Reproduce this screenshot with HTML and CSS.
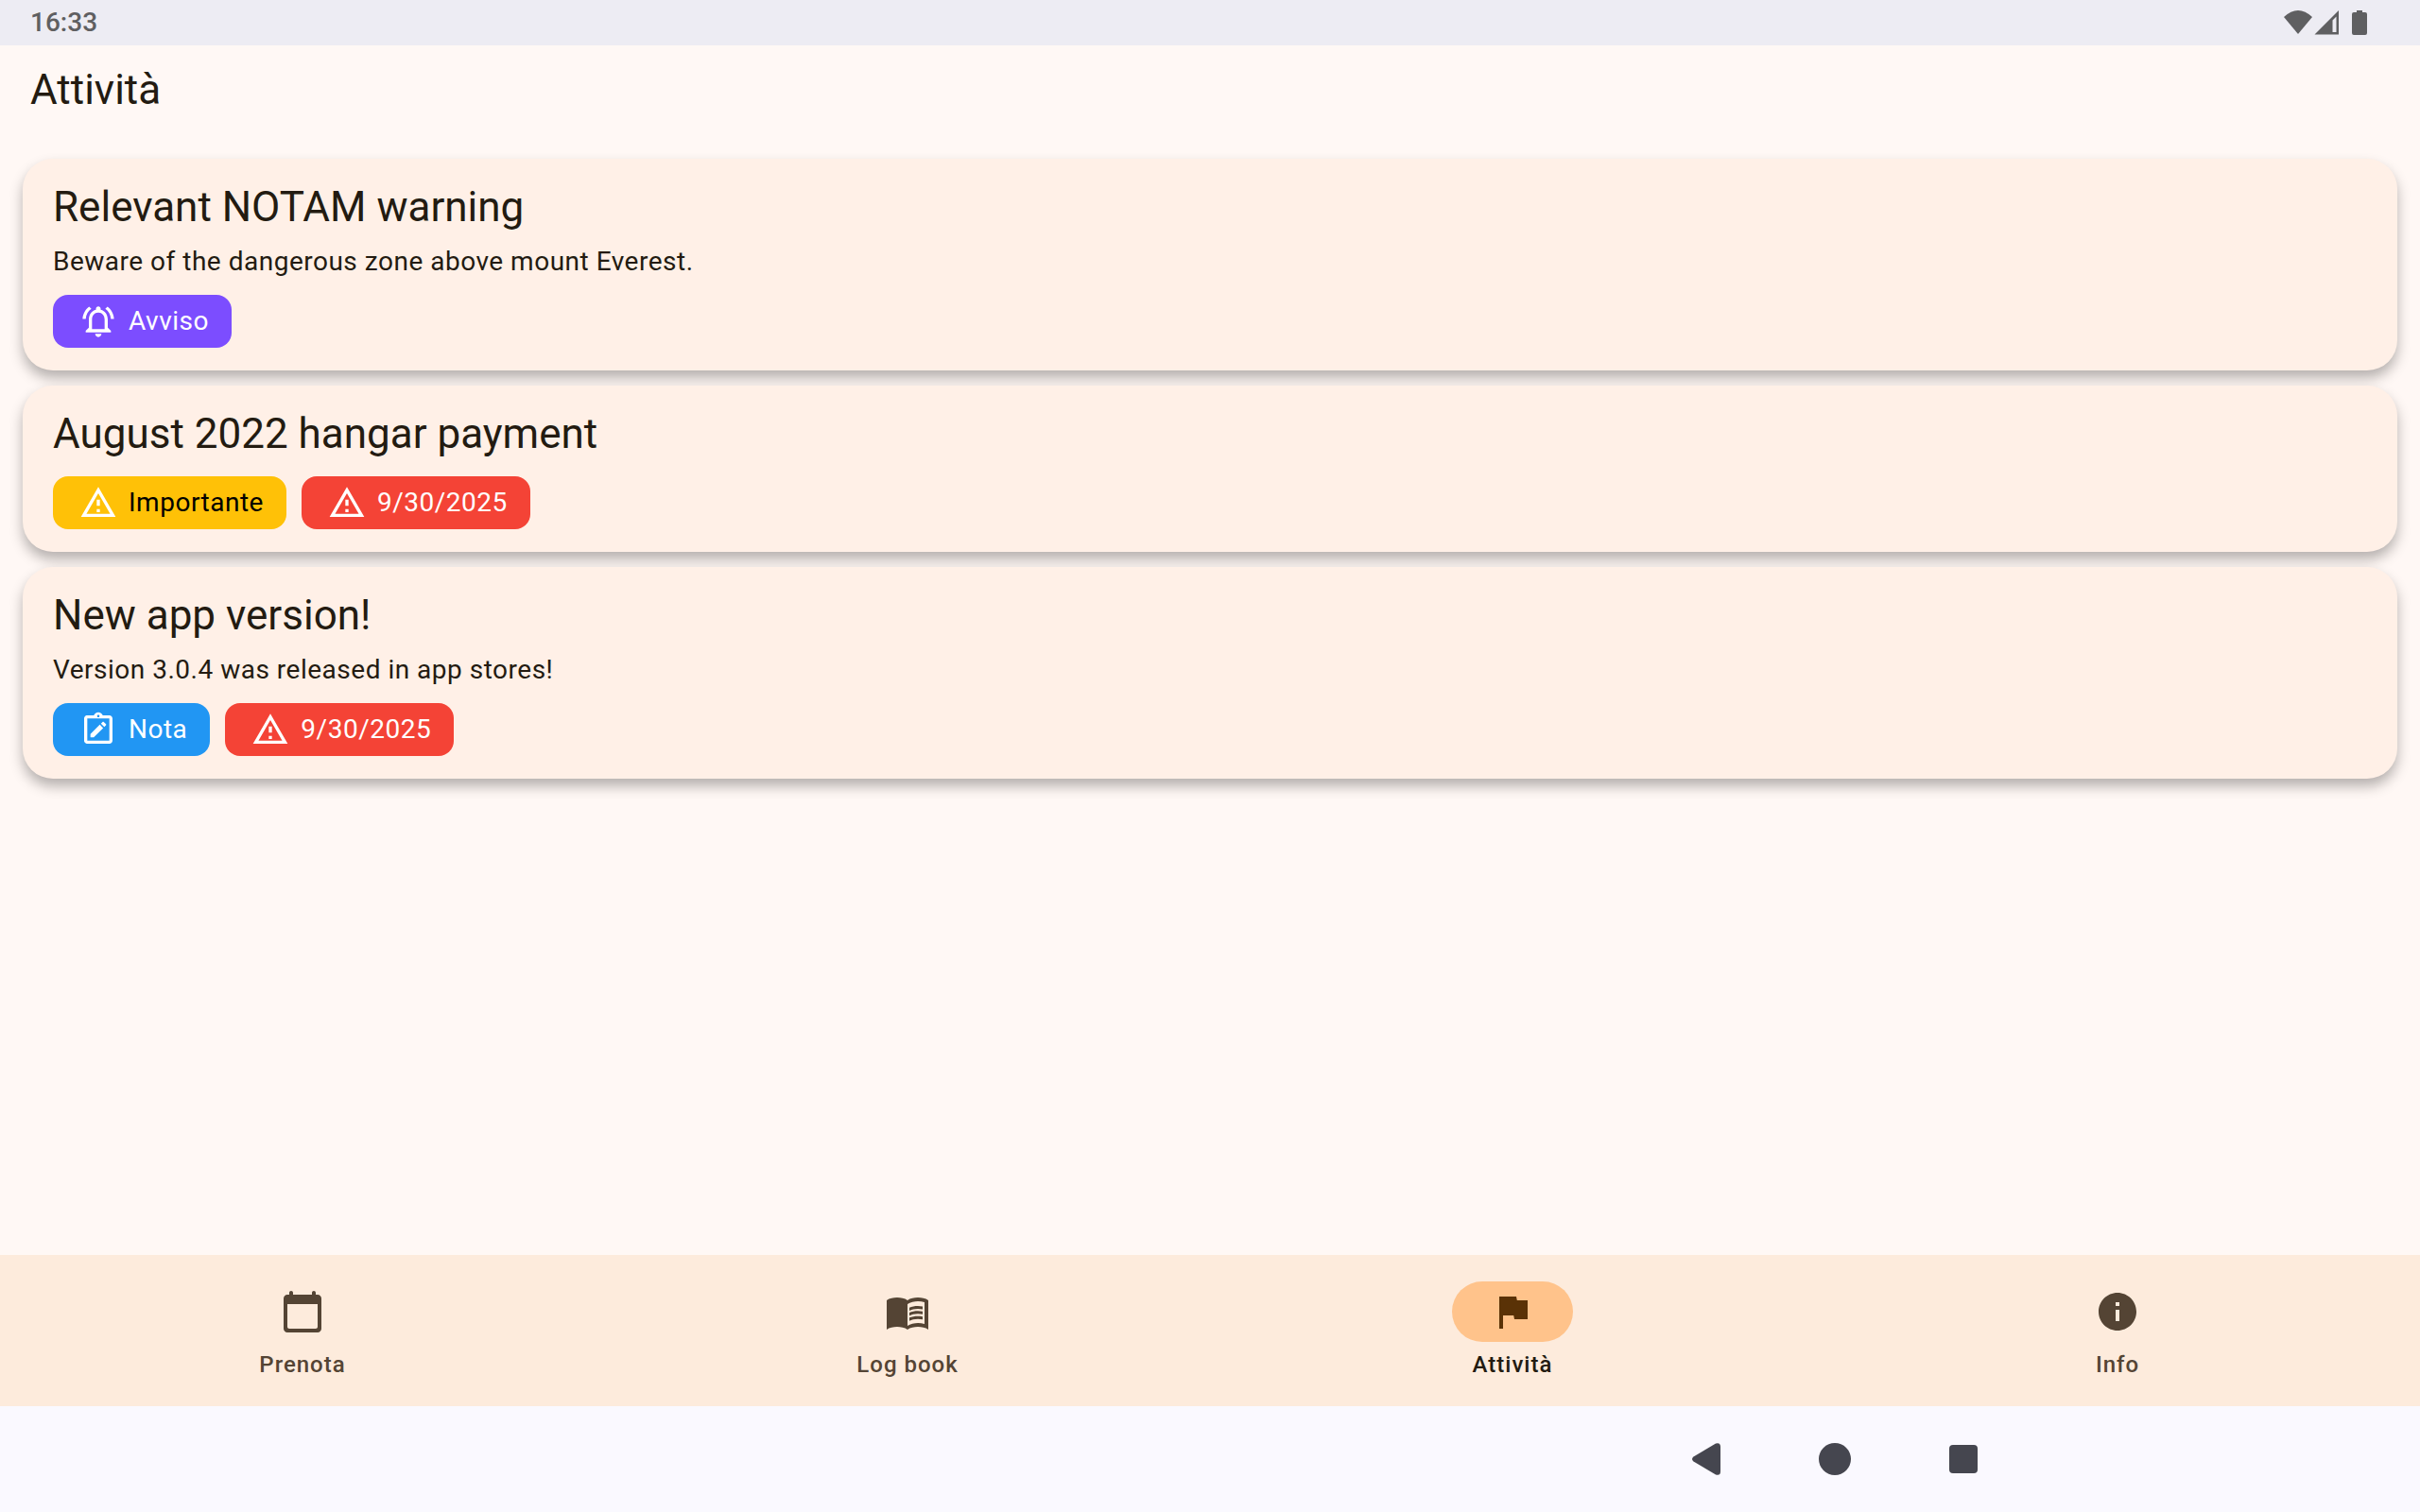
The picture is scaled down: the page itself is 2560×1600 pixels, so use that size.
FILE: index.html
```html
<!DOCTYPE html>
<html lang="it">
<head>
<meta charset="utf-8">
<meta name="viewport" content="width=device-width, initial-scale=1">
<title>Attività</title>
<link rel="stylesheet" href="styles.css">
</head>
<body>
<svg class="sprite" aria-hidden="true">
  <symbol id="warning" viewBox="0 0 24 24"><path d="M12 5.99L19.53 19H4.47L12 5.99M12 2L1 21h22L12 2zm1 14h-2v2h2v-2zm0-6h-2v4h2v-4z"/></symbol>
  <symbol id="bell" viewBox="0 0 24 24"><path d="M12 22c1.1 0 2-.9 2-2h-4c0 1.100.9 2 2 2zm6-6v-5c0-3.070-1.630-5.640-4.500-6.320V4c0-.83-.67-1.500-1.500-1.500s-1.500.67-1.500 1.500v.68C7.640 5.360 6 7.920 6 11v5l-2 2v1h16v-1l-2-2zm-2 1H8v-6c0-2.480 1.510-4.500 4-4.500s4 2.020 4 4.500v6zM7.580 4.080L6.150 2.650C3.750 4.480 2.170 7.300 2.030 10.500h2c.15-2.650 1.510-4.970 3.550-6.420zm12.390 6.420h2c-.15-3.200-1.730-6.020-4.120-7.850l-1.420 1.430c2.020 1.450 3.390 3.770 3.540 6.420z"/></symbol>
  <symbol id="note" viewBox="0 0 24 24"><path d="M19 3h-4.180C14.400 1.840 13.300 1 12 1s-2.400.84-2.820 2H5c-.14 0-.27.010-.4.040-.39.080-.74.280-1.010.550-.18.180-.33.400-.43.640-.1.230-.16.490-.16.770v14c0 .27.060.54.160.78s.25.450.43.640c.27.270.62.470 1.010.550.130.020.260.030.400.030h14c1.100 0 2-.9 2-2V5c0-1.100-.9-2-2-2zm-7-.25c.41 0 .75.340.75.750s-.34.750-.75.750-.75-.34-.75-.75.340-.75.750-.75zM19 19H5V5h14v14z"/><path d="M15.080 11.030l-2.120-2.120L7 14.860V17h2.100zM16.850 9.270c.2-.2.200-.51 0-.71l-1.410-1.410c-.2-.2-.51-.2-.71 0l-1.060 1.060 2.120 2.120z"/></symbol>
</svg>

<div class="status">
  <time class="clock">16:33</time>
  <svg class="signals" viewBox="0 0 90 28" aria-label="Wi-Fi, rete, batteria" role="img">
    <path d="M0 8Q15-6 30 8L15 26z"/>
    <path fill-rule="evenodd" d="M58 1v25.500H32.500zM55.500 7.500l-4 4V24h4z"/>
    <path d="M77 1h6v2h3q2 0 2 2v20q0 2-2 2H74q-2 0-2-2V5q0-2 2-2h3z"/>
  </svg>
</div>

<header class="topbar"><h1>Attività</h1></header>

<main class="list">
  <article class="card">
    <h2>Relevant NOTAM warning</h2>
    <p>Beware of the dangerous zone above mount Everest.</p>
    <div class="chips">
      <span class="chip notice"><svg><use href="#bell"/></svg>Avviso</span>
    </div>
  </article>
  <article class="card">
    <h2>August 2022 hangar payment</h2>
    <div class="chips">
      <span class="chip important"><svg><use href="#warning"/></svg><span class="dark">Importante</span></span>
      <span class="chip due"><svg><use href="#warning"/></svg>9/30/2025</span>
    </div>
  </article>
  <article class="card">
    <h2>New app version!</h2>
    <p>Version 3.0.4 was released in app stores!</p>
    <div class="chips">
      <span class="chip note"><svg><use href="#note"/></svg>Nota</span>
      <span class="chip due"><svg><use href="#warning"/></svg>9/30/2025</span>
    </div>
  </article>
</main>

<nav class="tabs">
  <a class="tab" href="#prenota">
    <span class="pill"><svg viewBox="0 0 24 24"><path d="M20 3h-1V2c0-.55-.45-1-1-1s-1 .45-1 1v1H7V2c0-.55-.45-1-1-1s-1 .45-1 1v1H4c-1.100 0-2 .9-2 2v16c0 1.100.9 2 2 2h16c1.100 0 2-.9 2-2V5c0-1.100-.9-2-2-2zm-1 18H5c-.55 0-1-.45-1-1V8h16v12c0 .55-.45 1-1 1z"/></svg></span>
    Prenota
  </a>
  <a class="tab" href="#logbook">
    <span class="pill"><svg viewBox="0 0 24 24"><path d="M17.500 4.500c-1.950 0-4.050.4-5.500 1.500-1.450-1.100-3.550-1.500-5.500-1.500-1.950 0-4.050.4-5.500 1.500v15.500c1.450-1.100 3.550-1.500 5.500-1.500s4.050.4 5.500 1.500c1.450-1.100 3.550-1.500 5.500-1.500s4.050.4 5.500 1.500V6c-1.450-1.100-3.550-1.500-5.500-1.500zm3.500 14c-1.100-.35-2.300-.5-3.500-.5-1.700 0-4.150.65-5.500 1.500V8c1.350-.85 3.800-1.500 5.500-1.500 1.200 0 2.400.15 3.500.5v11.500z"/><path d="M17.500 10.500c.88 0 1.730.09 2.500.26V9.240c-.79-.15-1.640-.24-2.500-.24-1.700 0-3.240.29-4.500.83v1.660c1.130-.64 2.700-.99 4.500-.99zM13 12.490v1.660c1.130-.64 2.700-.99 4.500-.99.880 0 1.730.09 2.500.26V11.900c-.79-.15-1.640-.24-2.500-.24-1.700 0-3.240.3-4.500.83zM17.500 14.330c-1.700 0-3.240.29-4.500.83v1.660c1.130-.64 2.700-.99 4.500-.99.880 0 1.730.09 2.500.26v-1.520c-.79-.16-1.640-.24-2.500-.24z"/></svg></span>
    Log book
  </a>
  <a class="tab active" href="#attivita" aria-current="page">
    <span class="pill"><svg viewBox="0 0 24 24"><path d="M14.400 6L14 4H5v17h2v-7h5.600l.4 2h7V6z"/></svg></span>
    Attività
  </a>
  <a class="tab" href="#info">
    <span class="pill"><svg viewBox="0 0 24 24"><path d="M12 2C6.480 2 2 6.480 2 12s4.480 10 10 10 10-4.480 10-10S17.520 2 12 2zm1 15h-2v-6h2v6zm0-8h-2V7h2v2z"/></svg></span>
    Info
  </a>
</nav>

<div class="system">
  <button type="button" aria-label="Indietro"><svg viewBox="0 0 40 40"><path d="M6.500 17.500L30 3.500Q35 2 35 7V33Q35 38 30 36.500L6.500 22.500Q3.500 20 6.500 17.500z"/></svg></button>
  <button type="button" aria-label="Home"><svg viewBox="0 0 40 40"><circle cx="20" cy="20" r="17"/></svg></button>
  <button type="button" aria-label="Recenti"><svg viewBox="0 0 40 40"><rect x="5" y="5" width="30" height="30" rx="4"/></svg></button>
</div>
</body>
</html>
```
FILE: styles.css
```css
* {
  box-sizing: border-box;
}

body {
  margin: 0;
  min-height: 100vh;
  display: flex;
  flex-direction: column;
  background: #fff8f5;
  color: #231b11;
  font: 400 28px/40px Roboto, sans-serif;
}

svg {
  display: block;
  fill: currentColor;
}

.sprite {
  position: absolute;
  width: 0;
  height: 0;
}

h1,
h2,
p {
  margin: 0;
}

h1,
h2 {
  padding-bottom: 2px;
  font-size: 44px;
  line-height: 54px;
  font-weight: 400;
}

.status {
  display: flex;
  align-items: center;
  justify-content: space-between;
  height: 48px;
  padding: 0 54px 0 32px;
  background: #edecf3;
  color: #5f5f61;
}

.clock {
  font-weight: 500;
}

.signals {
  width: 90px;
  height: 28px;
}

.topbar {
  padding: 20px 32px;
}

.list {
  flex: 1;
  display: flex;
  flex-direction: column;
  gap: 16px;
  padding: 24px;
}

.card {
  padding: 24px 32px;
  border-radius: 32px;
  background: #fff0e7;
  box-shadow: 0 8px 14px rgba(0, 0, 0, 0.29);
}

.card p {
  padding-top: 10px;
  line-height: 38px;
  letter-spacing: 0.018em;
}

.chips {
  display: flex;
  flex-wrap: wrap;
  gap: 16px;
  margin-top: 16px;
}

.chip {
  display: flex;
  align-items: center;
  gap: 12px;
  height: 56px;
  padding: 0 24px 0 28px;
  border-radius: 16px;
  color: #fff;
  letter-spacing: 0.018em;
}

.chip svg {
  width: 40px;
  height: 40px;
}

.dark {
  color: #000;
}

.notice {
  background: #7c4dff;
}

.important {
  background: #ffc107;
}

.due {
  background: #f44336;
}

.note {
  background: #2196f3;
}

.tabs {
  display: grid;
  grid-template-columns: repeat(4, 1fr);
  background: #fdebdc;
}

.tab {
  display: flex;
  flex-direction: column;
  align-items: center;
  gap: 8px;
  padding: 28px 0;
  color: #544434;
  font-size: 24px;
  line-height: 32px;
  font-weight: 500;
  letter-spacing: 1px;
  text-decoration: none;
}

.pill {
  display: grid;
  place-items: center;
  width: 128px;
  height: 64px;
  border-radius: 32px;
}

.pill svg {
  width: 48px;
  height: 48px;
}

.active {
  color: #231b11;
}

.active .pill {
  background: #ffc38b;
  color: #5a3206;
}

.system {
  display: flex;
  justify-content: flex-end;
  height: 112px;
  padding-right: 16.2%;
  background: #faf9ff;
}

.system button {
  display: grid;
  place-items: center;
  width: 136px;
  padding: 0;
  border: 0;
  background: none;
  color: #45464f;
}

.system svg {
  width: 40px;
  height: 40px;
}
```
